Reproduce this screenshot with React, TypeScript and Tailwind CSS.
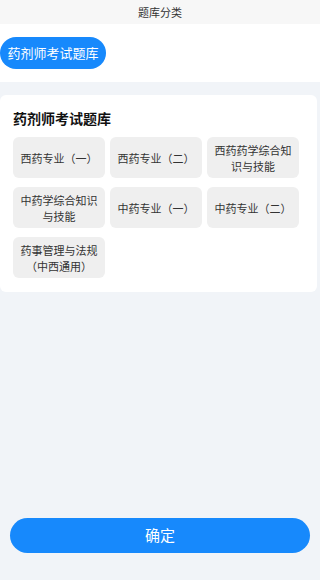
const items = [
  "西药专业（一）",
  "西药专业（二）",
  "西药药学综合知识与技能",
  "中药学综合知识与技能",
  "中药专业（一）",
  "中药专业（二）",
  "药事管理与法规（中西通用）",
];

export default function App() {
  return (
    <div
      className="flex h-[580px] w-[320px] flex-col bg-[#f1f4f8]"
      style={{ fontFamily: '"Noto Sans CJK SC", "Noto Sans", sans-serif' }}
    >
      {/* top bar */}
      <div className="flex h-6 items-center justify-center bg-[#f7f7f7] text-[11px] text-[#333]">
        题库分类
      </div>

      {/* category tabs */}
      <div className="bg-white py-[13px]">
        <button className="flex h-8 w-[106px] items-center justify-center rounded-full bg-[#1789fc] text-[13px] text-white">
          药剂师考试题库
        </button>
      </div>

      <div className="mt-[13px] w-[317px] rounded-md bg-white px-[13px] pb-[14px] pt-[13px]">
        <h2 className="h-5 text-[14px] font-bold leading-5 text-[#111]">药剂师考试题库</h2>
        <div className="mt-[9px] grid grid-cols-[92px_92px_92px] gap-x-[5px] gap-y-[9px]">
          {items.map((t) => (
            <div
              key={t}
              className="flex h-[41px] items-center justify-center rounded-md bg-[#efefef] px-[6px] text-center text-[11px] leading-[16px] text-[#333]"
            >
              {t}
            </div>
          ))}
        </div>
      </div>

      <div className="flex-1" />

      <div className="mb-[27px] px-[10px]">
        <button className="flex h-[35px] w-full items-center justify-center rounded-full bg-[#1789fc] text-[15px] text-white">
          确定
        </button>
      </div>
    </div>
  );
}
